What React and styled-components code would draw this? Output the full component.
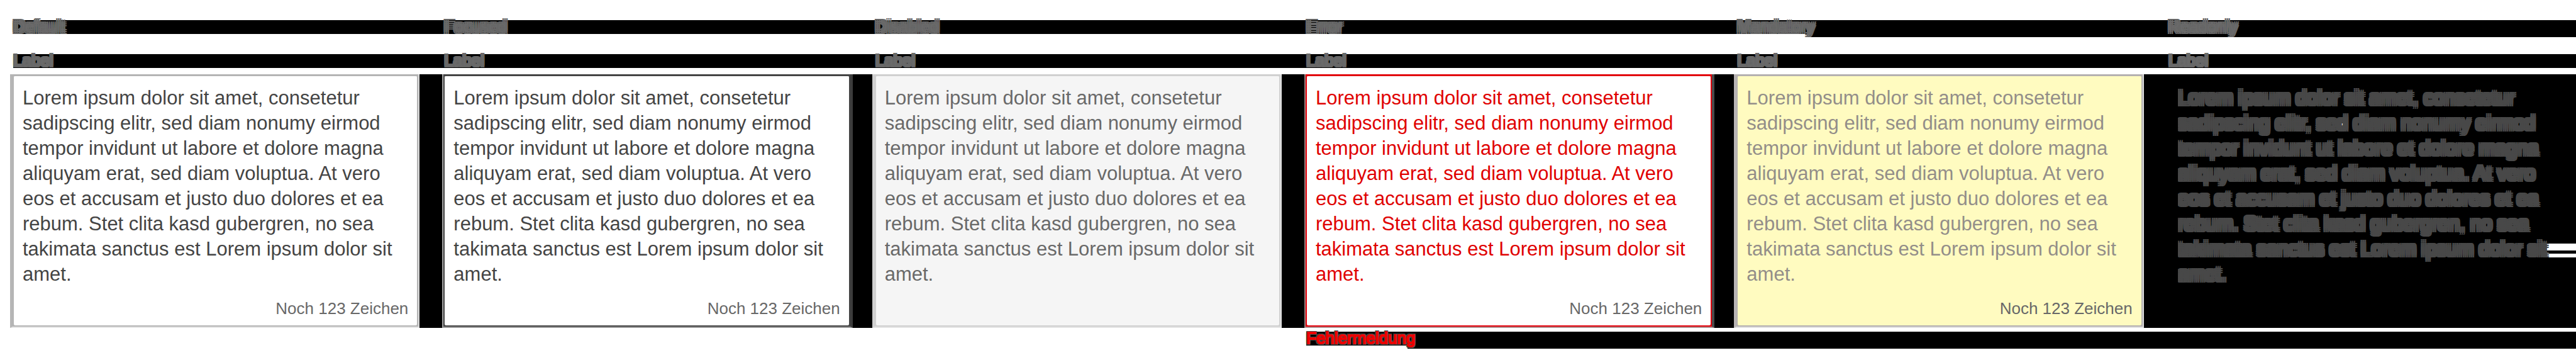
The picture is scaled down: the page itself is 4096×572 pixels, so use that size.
import React from "react";
import styled, { createGlobalStyle, css } from "styled-components";

const GlobalStyle = createGlobalStyle`
  *, *::before, *::after { box-sizing: border-box; }
  body {
    margin: 0;
    background: #fff;
    font-family: "Liberation Sans", Arial, Helvetica, sans-serif;
    overflow-x: hidden;
  }
`;

/* Blocky halo around glyphs */
const halo = (size, color) => css`
  text-shadow:
    ${size}px 0 ${color}, -${size}px 0 ${color},
    0 ${size}px ${color}, 0 -${size}px ${color},
    ${size}px ${size}px ${color}, -${size}px ${size}px ${color},
    ${size}px -${size}px ${color}, -${size}px -${size}px ${color};
`;

const Sheet = styled.main`
  display: flex;
  flex-direction: column;
  padding: 32px 0 18px;
`;

const BarRow = styled.div`
  display: grid;
  grid-template-columns: repeat(5, 685fr) 648fr;
  margin-left: 21px;
  margin-top: ${(p) => p.$gap || 0}px;
  height: ${(p) => (p.$tall ? 27 : 22)}px;
`;

/* Black bar segment; from $step onwards it reaches the deeper edge */
const BarCell = styled.div`
  min-width: 0;
  background:
    linear-gradient(#000, #000) 0 0 / 100% 22px no-repeat,
    linear-gradient(#000, #000) ${(p) => p.$step || 0}px 0 / ${(p) => (p.$step === undefined ? 0 : 100)}% 27px no-repeat;
`;

const EmptyCell = styled.div``;

const barText = css`
  display: block;
  margin: 0;
  font-size: 26px;
  font-weight: 400;
  line-height: 20px;
  white-space: nowrap;
`;

const Heading = styled.h2`
  ${barText}
  color: #6a6a6a;
  ${halo(3, "#676767")}
`;

const FieldLabel = styled.label`
  ${barText}
  color: #6a6a6a;
  ${halo(2, "#676767")}
`;

const ErrorText = styled.p`
  ${barText}
  color: #ee0000;
  -webkit-text-stroke: 2px #ee0000;
  ${halo(2, "#4a4a4a")}
`;

const BoxRow = styled.div`
  display: grid;
  grid-template-columns: repeat(5, 685fr) 653fr;
  margin: 10px 0 6px 16px;
  height: 403px;
  background: #000;
`;

const BoxCell = styled.div`
  display: flex;
  min-width: 0;
  padding-right: ${(p) => p.$gap}px;
  padding-left: ${(p) => p.$lead}px;
  ${(p) =>
    p.$notched &&
    css`
      background:
        linear-gradient(#fff, #fff) right 0 top 269px / 48px 11px no-repeat,
        linear-gradient(#fff, #fff) right 0 top 285px / 48px 6px no-repeat,
        linear-gradient(#fff, #fff) 280px 78px / 5px 5px no-repeat;
    `}
`;

const Frame = styled.div`
  flex: 1;
  display: flex;
  min-width: 0;
  border-style: solid;
  border-width: 0 ${(p) => p.$t.rightWidth}px 2px ${(p) => p.$t.leftWidth}px;
  border-color: transparent ${(p) => p.$t.right} ${(p) => p.$t.bottom} ${(p) => p.$t.left};
  background: ${(p) => p.$t.border};
`;

const Card = styled.div`
  flex: 1;
  display: flex;
  flex-direction: column;
  min-width: 0;
  border: 2px solid ${(p) => p.$t.border};
  border-top-width: 3px;
  border-radius: 4px;
  background: ${(p) => p.$t.fill};
  padding: 15px 14px 12px 14px;
`;

const TextArea = styled.textarea`
  flex: 1;
  width: 100%;
  margin: 0;
  padding: 0;
  border: 0;
  outline: 0;
  resize: none;
  overflow: hidden;
  background: transparent;
  font-family: inherit;
  font-size: 31px;
  line-height: 40px;
  color: ${(p) => p.$t.text};
  opacity: 1;
  ${(p) => p.$t.blocky && halo(3, p.$t.text)}
`;

const Counter = styled.output`
  align-self: flex-end;
  font-size: 26px;
  line-height: 30px;
  color: #686868;
`;

const TEXT = [
  "Lorem ipsum dolor sit amet, consetetur",
  "sadipscing elitr, sed diam nonumy eirmod",
  "tempor invidunt ut labore et dolore magna",
  "aliquyam erat, sed diam voluptua. At vero",
  "eos et accusam et justo duo dolores et ea",
  "rebum. Stet clita kasd gubergren, no sea",
  "takimata sanctus est Lorem ipsum dolor sit",
  "amet.",
].join("\n");

const themes = {
  normal: { lead: 0, gap: 34, leftWidth: 4, left: "#b6b6b6", rightWidth: 2, right: "#dcdcdc", bottom: "#e6e6e6", border: "#b4b4b4", fill: "#fff", text: "#444" },
  focused: { lead: 2, gap: 31, leftWidth: 2, left: "#a2a2a2", rightWidth: 4, right: "#3c3c3c", bottom: "#999", border: "#444", fill: "#fff", text: "#444" },
  disabled: { lead: 0, gap: 34, leftWidth: 4, left: "#d0d0d0", rightWidth: 2, right: "#e4e4e4", bottom: "#e4e4e4", border: "#d0d0d0", fill: "#f5f5f5", text: "#696969" },
  error: { lead: 2, gap: 31, leftWidth: 2, left: "#968080", rightWidth: 4, right: "#4a4a4a", bottom: "#b09090", border: "#e2000a", fill: "#fff", text: "#e00000" },
  mandatory: { lead: 0, gap: 34, leftWidth: 4, left: "#b8b4b4", rightWidth: 2, right: "#dcdcdc", bottom: "#e0e0e0", border: "#b4b0b0", fill: "#fffbc0", text: "#938e89" },
  readonly: { lead: 0, gap: 0, leftWidth: 4, left: "transparent", rightWidth: 0, right: "transparent", bottom: "transparent", border: "transparent", fill: "transparent", text: "#484848", blocky: true },
};

const fields = [
  { id: "default", title: "Default", theme: themes.normal, counter: true },
  { id: "focused", title: "Focused", theme: themes.focused, counter: true },
  { id: "disabled", title: "Disabled", theme: themes.disabled, disabled: true },
  { id: "error", title: "Error", theme: themes.error, counter: true, error: "Fehlermeldung" },
  { id: "mandatory", title: "Mandatory", theme: themes.mandatory, counter: true, step: 114 },
  { id: "readonly", title: "Readonly", theme: themes.readonly, readOnly: true, step: 0 },
];

export default function App() {
  return (
    <>
      <GlobalStyle />
      <Sheet>
        <BarRow $tall>
          {fields.map((f) => (
            <BarCell key={f.id} $step={f.step}>
              <Heading>{f.title}</Heading>
            </BarCell>
          ))}
        </BarRow>
        <BarRow $gap={27}>
          {fields.map((f) => (
            <BarCell key={f.id}>
              <FieldLabel htmlFor={f.id}>Label</FieldLabel>
            </BarCell>
          ))}
        </BarRow>
        <BoxRow>
          {fields.map((f) => (
            <BoxCell key={f.id} $lead={f.theme.lead} $gap={f.theme.gap} $notched={f.readOnly}>
              <Frame $t={f.theme}>
                <Card $t={f.theme}>
                  <TextArea
                    id={f.id}
                    $t={f.theme}
                    defaultValue={TEXT}
                    disabled={f.disabled}
                    readOnly={f.readOnly}
                    spellCheck={false}
                    aria-describedby={f.error ? f.id + "-message" : undefined}
                  />
                  {f.counter && <Counter htmlFor={f.id}>Noch 123 Zeichen</Counter>}
                </Card>
              </Frame>
            </BoxCell>
          ))}
        </BoxRow>
        <BarRow $tall>
          {fields.map((f, i) =>
            i < 3 ? (
              <EmptyCell key={f.id} />
            ) : (
              <BarCell key={f.id} $step={i === 3 ? 161 : 0}>
                {f.error && <ErrorText id={f.id + "-message"}>{f.error}</ErrorText>}
              </BarCell>
            )
          )}
        </BarRow>
      </Sheet>
    </>
  );
}
